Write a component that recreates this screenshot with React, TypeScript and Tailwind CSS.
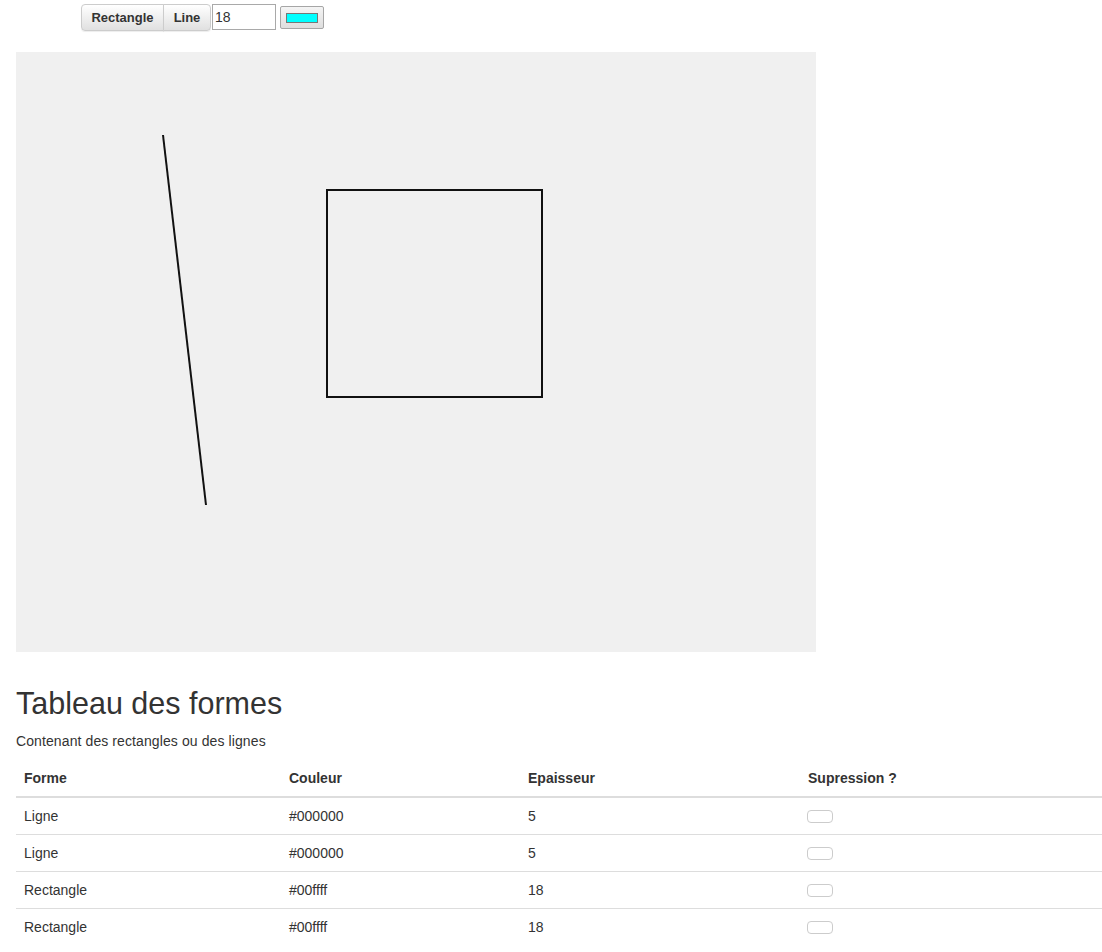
const rows = [
  { forme: "Ligne", couleur: "#000000", epaisseur: "5" },
  { forme: "Ligne", couleur: "#000000", epaisseur: "5" },
  { forme: "Rectangle", couleur: "#00ffff", epaisseur: "18" },
  { forme: "Rectangle", couleur: "#00ffff", epaisseur: "18" },
];

const App = () => {
  return (
    <div className="min-h-screen bg-white text-[#333] font-['Liberation_Sans',Arial,sans-serif] text-[14px]">
      {/* toolbar */}
      <div className="flex items-start pt-[4px] pl-[81px] h-[52px]">
        <div className="flex">
          <button className="h-[27px] w-[83px] text-[13px] font-bold text-[#333] border border-[#ccc] rounded-l-[4px] bg-gradient-to-b from-white to-[#e0e0e0] shadow-[0_1px_1px_rgba(0,0,0,0.075)]">
            Rectangle
          </button>
          <button className="h-[27px] w-[48px] -ml-px text-[13px] font-bold text-[#333] border border-[#ccc] rounded-r-[4px] bg-gradient-to-b from-white to-[#e0e0e0] shadow-[0_1px_1px_rgba(0,0,0,0.075)]">
            Line
          </button>
        </div>
        <input
          defaultValue="18"
          className="ml-[1px] h-[26px] w-[64px] border border-[#a9a9a9] px-[2px] text-[14px] text-[#333] outline-none"
        />
        <button className="ml-[4px] mt-[2px] h-[23px] w-[44px] flex items-center justify-center border border-[#a6a6a6] rounded-[2px] bg-gradient-to-b from-[#f4f4f4] to-[#dedede]">
          <span className="block w-[32px] h-[10px] bg-[#00ffff] border border-[#777]" />
        </button>
      </div>

      {/* canvas */}
      <div className="pl-4">
        <svg width="800" height="600" className="block bg-[#f0f0f0]">
          <line x1="147" y1="83" x2="190" y2="453" stroke="#111" strokeWidth="2" />
          <rect x="311" y="138" width="215" height="207" fill="none" stroke="#111" strokeWidth="2" />
        </svg>
      </div>

      {/* table section */}
      <div className="pl-4">
        <h2 className="mt-[35px] text-[30.5px] leading-[33px] font-normal text-[#333]">Tableau des formes</h2>
        <p className="mt-[11px] leading-[20px] tracking-[0.1px]">Contenant des rectangles ou des lignes</p>
        <table className="mt-[9px] w-[1086px] border-collapse table-fixed">
          <colgroup>
            <col className="w-[265px]" />
            <col className="w-[239px]" />
            <col className="w-[280px]" />
            <col />
          </colgroup>
          <thead>
            <tr className="border-b-2 border-[#ddd]">
              <th className="text-left font-bold p-2 leading-[20px]">Forme</th>
              <th className="text-left font-bold p-2 leading-[20px]">Couleur</th>
              <th className="text-left font-bold p-2 leading-[20px]">Epaisseur</th>
              <th className="text-left font-bold p-2 leading-[20px]">Supression ?</th>
            </tr>
          </thead>
          <tbody>
            {rows.map((r, i) => (
              <tr key={i} className={i > 0 ? "border-t border-[#ddd]" : ""}>
                <td className="p-2 leading-[20px]">{r.forme}</td>
                <td className="p-2 leading-[20px]">{r.couleur}</td>
                <td className="p-2 leading-[20px]">{r.epaisseur}</td>
                <td className="p-2 pl-[7px] leading-[20px]">
                  <button className="block w-[26px] h-[13px] rounded-[4px] border border-[#ccc] bg-white" />
                </td>
              </tr>
            ))}
          </tbody>
        </table>
      </div>
    </div>
  );
};

export default App;
